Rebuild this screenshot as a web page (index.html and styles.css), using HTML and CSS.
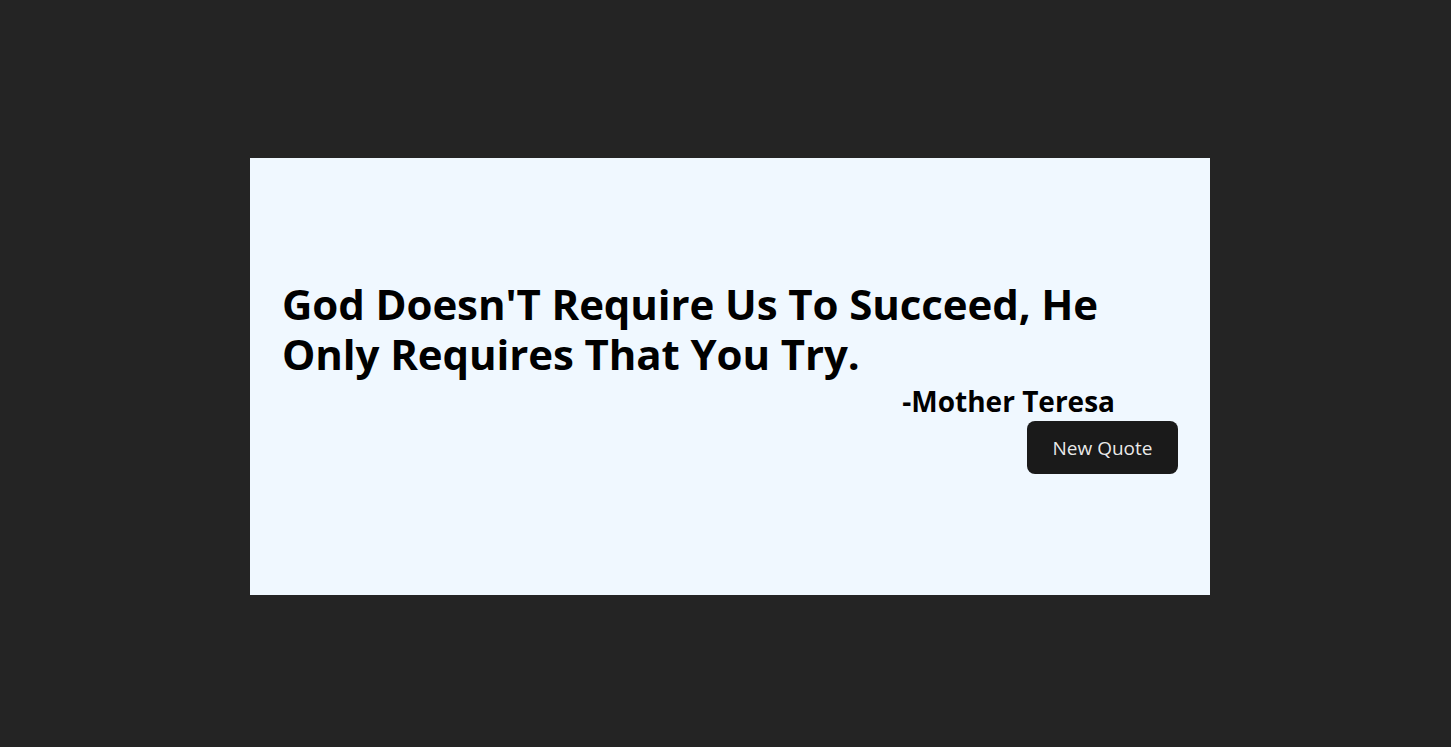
FILE: index.html
```html
<!DOCTYPE html>
<html lang="en">
<head>
<meta charset="utf-8">
<title>Quote Generator</title>
<link rel="stylesheet" href="styles.css">
</head>
<body>
  <main class="card">
    <h1 class="quote">God Doesn'T Require Us To Succeed, He Only Requires That You Try.</h1>
    <p class="author">-Mother Teresa</p>
    <div class="actions">
      <button class="btn" type="button">New Quote</button>
    </div>
  </main>
</body>
</html>
```
FILE: styles.css
```css
html, body {
  margin: 0;
  padding: 0;
}
body {
  background: #242424;
  font-family: "Open Sans", "Noto Sans", sans-serif;
  min-height: 747px;
  display: flex;
  justify-content: center;
  align-items: flex-start;
  padding-left: 9px;
  box-sizing: border-box;
}
.card {
  margin-top: 158px;
  width: 960px;
  height: 437px;
  box-sizing: border-box;
  background: #f0f8ff;
  padding: 0 32px;
  display: flex;
  flex-direction: column;
  justify-content: center;
  color: #000;
}
.quote {
  margin: 0;
  font-size: 42px;
  line-height: 50px;
  font-weight: 700;
  letter-spacing: -0.1px;
}
.author {
  margin: 4px 63px 0 0;
  text-align: right;
  font-size: 28px;
  line-height: 36px;
  font-weight: 700;
}
.actions {
  display: flex;
  justify-content: flex-end;
  margin-top: 2px;
}
.btn {
  width: 151px;
  height: 53px;
  border: 1px solid transparent;
  border-radius: 8px;
  background: #1a1a1a;
  color: rgba(255,255,255,0.92);
  font-family: "Open Sans", "Noto Sans", sans-serif;
  font-size: 19px;
  font-weight: 400;
  padding: 0;
  cursor: pointer;
}
```
